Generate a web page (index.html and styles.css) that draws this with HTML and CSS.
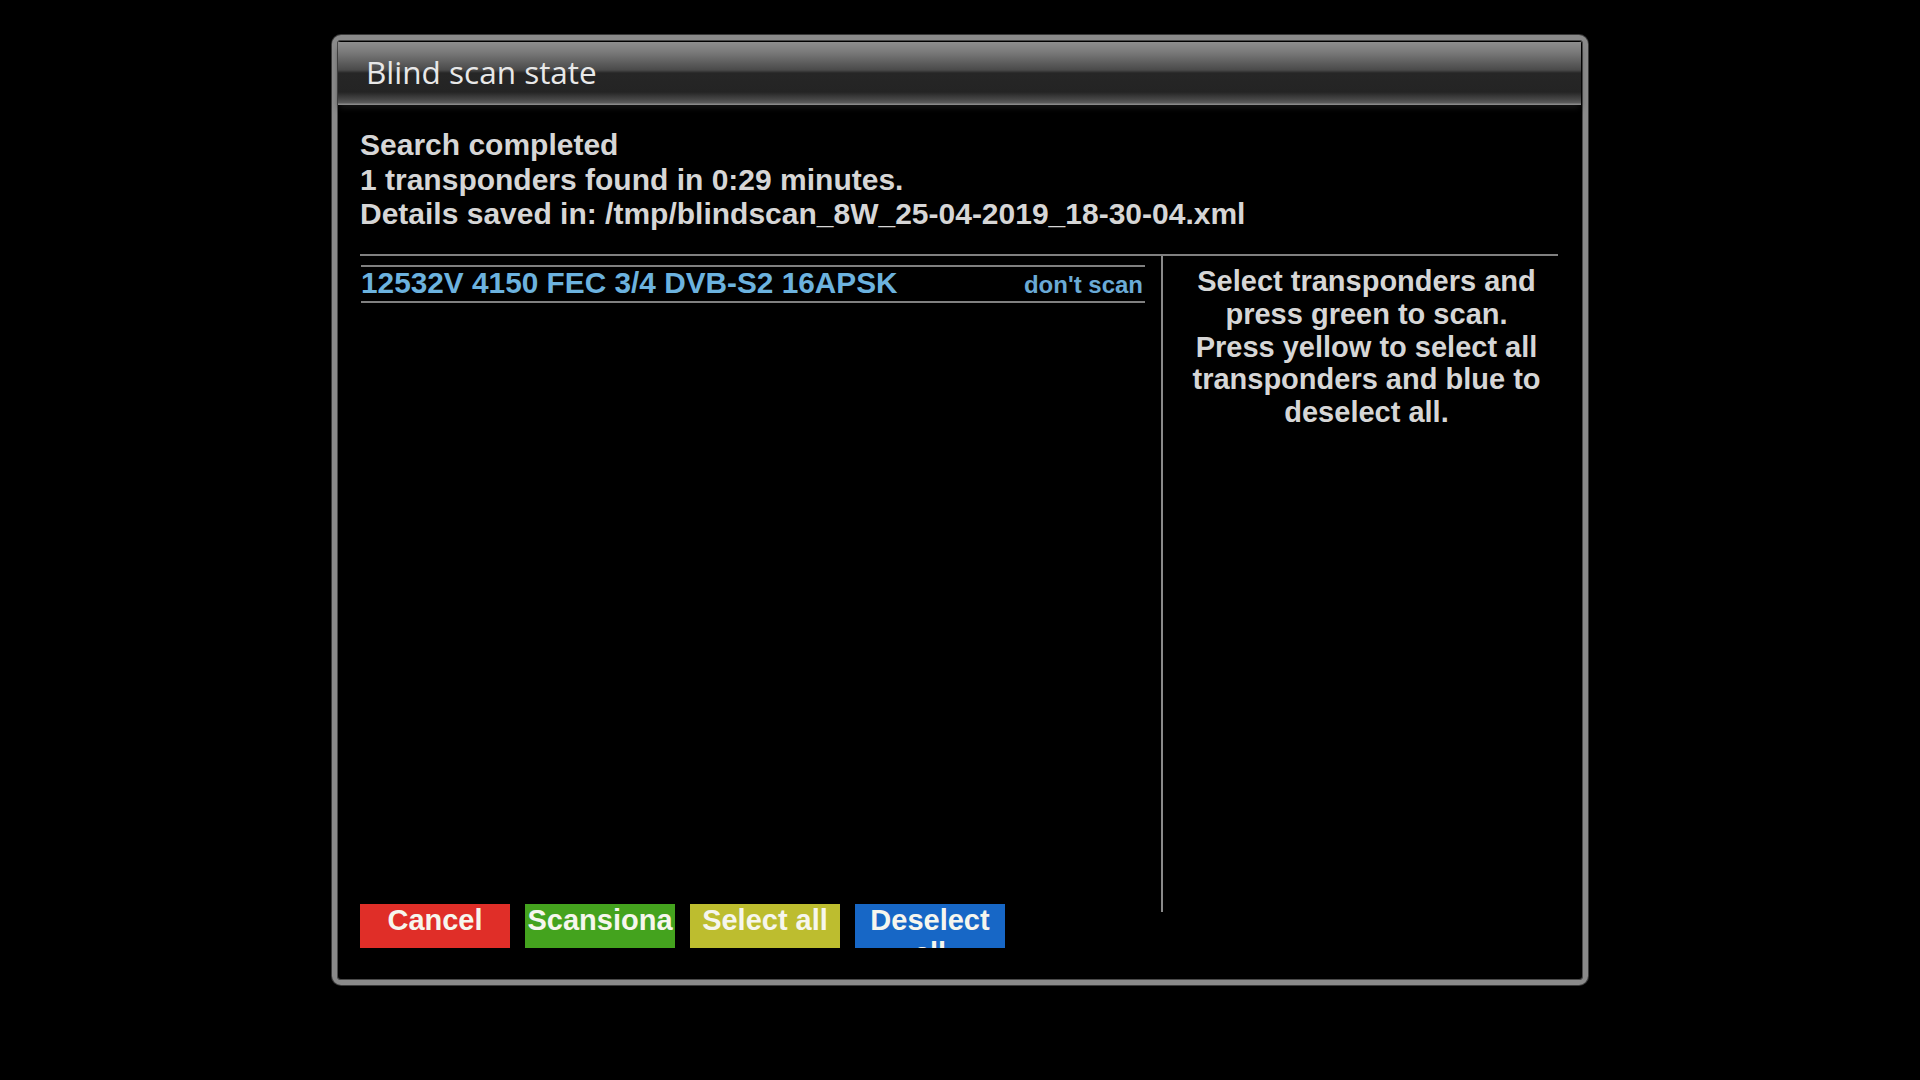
FILE: index.html
```html
<!DOCTYPE html>
<html>
<head>
<meta charset="utf-8">
<title>Blind scan state</title>
<link rel="stylesheet" href="styles.css">
</head>
<body>
<div class="frame">
  <div class="titlebar">Blind scan state</div>
  <div class="content">
    <div class="info">Search completed<br>1 transponders found in 0:29 minutes.<br>Details saved in: /tmp/blindscan_8W_25-04-2019_18-30-04.xml</div>
    <div class="columns">
      <div class="list">
        <div class="row"><span class="tp">12532V 4150 FEC 3/4 DVB-S2 16APSK</span><span class="state">don't scan</span></div>
      </div>
      <div class="help">Select transponders and<br>press green to scan.<br>Press yellow to select all<br>transponders and blue to<br>deselect all.</div>
    </div>
    <div class="buttons">
      <div class="btn red">Cancel</div>
      <div class="btn green">Scansiona</div>
      <div class="btn yellow">Select all</div>
      <div class="btn blue">Deselect all</div>
    </div>
  </div>
</div>
</body>
</html>
```
FILE: styles.css
```css
html, body {
  margin: 0;
  padding: 0;
  background: #000;
}
body {
  width: 1920px;
  height: 1080px;
  overflow: hidden;
  font-family: "Liberation Sans", Arial, sans-serif;
}
.frame {
  box-sizing: border-box;
  width: 1256px;
  height: 950px;
  margin: 35px auto 0;
  border: 5px solid #8a8a8a;
  border-radius: 9px;
  box-shadow: 0 0 0 1px #3a3a3a, inset 0 0 0 1px #4a4a4a;
  background: #000;
  display: flex;
  flex-direction: column;
}
.titlebar {
  box-sizing: border-box;
  height: 63px;
  margin: 2px 2px 0 1px;
  padding-left: 28px;
  font-family: "Open Sans", "DejaVu Sans", sans-serif;
  font-size: 31.5px;
  line-height: 59px;
  color: #e8e8e8;
  background: linear-gradient(to bottom,
    #8e8e8e 0px, #7a7a7a 10px, #4a4a4a 28px, #262626 31px,
    #242424 50px, #4a4a4a 58px, #5c5c5c 61px, #8a8a8a 62px, #8a8a8a 63px);
  box-shadow: 0 5px 6px -2px #151515;
}
.content {
  flex: 1;
  display: flex;
  flex-direction: column;
  padding: 0 25px 0 23px;
}
.info {
  margin-top: 23px;
  font-weight: bold;
  font-size: 30px;
  line-height: 34.5px;
  color: #d6d6d6;
  white-space: nowrap;
}
.columns {
  box-sizing: border-box;
  margin-top: 22px;
  height: 658px;
  border-top: 2px solid #808080;
  display: flex;
}
.list {
  width: 801px;
  padding-top: 9px;
}
.row {
  margin: 0 16px 0 1px;
  border-top: 2px solid #808080;
  border-bottom: 2px solid #808080;
  display: flex;
  justify-content: space-between;
  align-items: baseline;
  font-weight: bold;
  color: #6cb2de;
  line-height: 32px;
  padding: 0 2px 2px 0;
  height: 32px;
}
.tp {
  font-size: 29.8px;
}
.state {
  font-size: 24px;
  color: #6aaad6;
}
.help {
  flex: 1;
  border-left: 2px solid #8a8a8a;
  padding: 9.6px 0 0 12px;
  text-align: center;
  font-weight: bold;
  font-size: 29px;
  line-height: 32.7px;
  color: #d6d6d6;
}
.buttons {
  display: flex;
  gap: 15px;
  margin-top: -8px;
}
.btn {
  width: 150px;
  height: 44px;
  overflow: hidden;
  text-align: center;
  font-weight: bold;
  font-size: 29px;
  line-height: 33px;
  color: #f6f6ee;
}
.red { background: #e02e28; }
.green { background: #44a31e; }
.yellow { background: #bdbd2f; }
.blue { background: #1767c6; }
```
